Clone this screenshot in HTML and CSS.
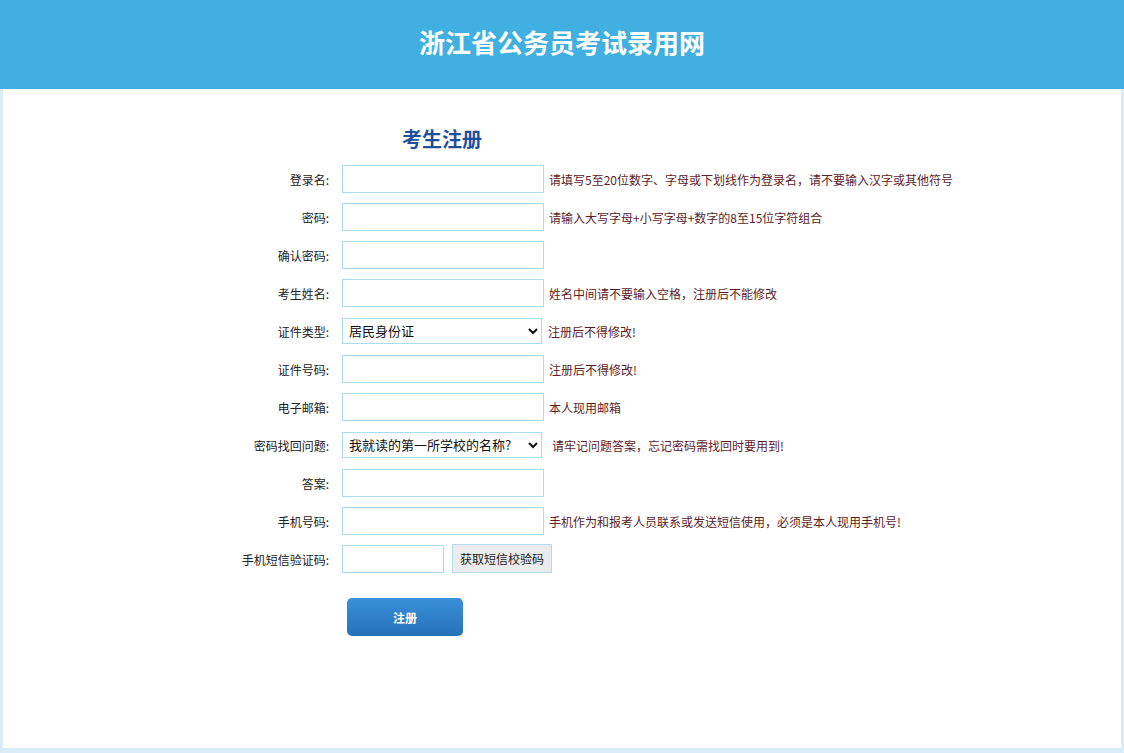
FILE: index.html
```html
<!DOCTYPE html>
<html lang="zh-CN">
<head>
<meta charset="utf-8">
<title>浙江省公务员考试录用网 - 考生注册</title>
<link rel="stylesheet" href="styles.css">
</head>
<body>
<header class="top">
  <h1 class="site-title">浙江省公务员考试录用网</h1>
</header>
<main class="panel">
  <h2 class="reg-title">考生注册</h2>
  <form class="reg-form">
    <div class="row">
      <label class="lbl">登录名:</label>
      <input class="ipt" type="text">
      <span class="hint">请填写5至20位数字、字母或下划线作为登录名，请不要输入汉字或其他符号</span>
    </div>
    <div class="row">
      <label class="lbl">密码:</label>
      <input class="ipt" type="password">
      <span class="hint">请输入大写字母+小写字母+数字的8至15位字符组合</span>
    </div>
    <div class="row">
      <label class="lbl">确认密码:</label>
      <input class="ipt" type="password">
    </div>
    <div class="row">
      <label class="lbl">考生姓名:</label>
      <input class="ipt" type="text">
      <span class="hint">姓名中间请不要输入空格，注册后不能修改</span>
    </div>
    <div class="row">
      <label class="lbl">证件类型:</label>
      <select class="sel"><option>居民身份证</option></select>
      <span class="hint hint-sel">注册后不得修改!</span>
    </div>
    <div class="row">
      <label class="lbl">证件号码:</label>
      <input class="ipt" type="text">
      <span class="hint">注册后不得修改!</span>
    </div>
    <div class="row">
      <label class="lbl">电子邮箱:</label>
      <input class="ipt" type="text">
      <span class="hint">本人现用邮箱</span>
    </div>
    <div class="row">
      <label class="lbl">密码找回问题:</label>
      <select class="sel"><option>我就读的第一所学校的名称?</option></select>
      <span class="hint hint-wide">请牢记问题答案，忘记密码需找回时要用到!</span>
    </div>
    <div class="row">
      <label class="lbl">答案:</label>
      <input class="ipt" type="text">
    </div>
    <div class="row">
      <label class="lbl">手机号码:</label>
      <input class="ipt" type="text">
      <span class="hint">手机作为和报考人员联系或发送短信使用，必须是本人现用手机号!</span>
    </div>
    <div class="row">
      <label class="lbl">手机短信验证码:</label>
      <input class="ipt ipt-short" type="text">
      <button class="sms-btn" type="button">获取短信校验码</button>
    </div>
    <div class="submit-row">
      <button class="submit-btn" type="button">注册</button>
    </div>
  </form>
</main>
</body>
</html>
```

FILE: styles.css
```css
html, body {
  margin: 0;
  padding: 0;
}
body {
  background: #dbecf9;
  height: 753px;
  font-family: "Noto Sans CJK SC", "Noto Sans", sans-serif;
  font-size: 12px;
  color: #222;
}
.top {
  height: 89px;
  background: #41afe1;
  display: flex;
  align-items: center;
  justify-content: center;
}
.site-title {
  margin: 0;
  padding-bottom: 6px;
  color: #fff;
  font-size: 26px;
  font-weight: bold;
  line-height: 30px;
  letter-spacing: 0;
}
.panel {
  display: block;
  margin: 0 3px;
  height: 659px;
  background: #fff;
  box-sizing: border-box;
  padding-top: 36px;
}
.reg-title {
  margin: 0 0 12px 399px;
  font-size: 20px;
  line-height: 28px;
  font-weight: bold;
  color: #1f4f9c;
}
.reg-form {
  margin-left: 228px;
}
.row {
  display: flex;
  align-items: center;
  height: 28px;
  margin-bottom: 10px;
}
.lbl {
  width: 111px;
  text-align: right;
  padding-right: 13px;
  box-sizing: border-box;
  white-space: nowrap;
  color: #222;
}
.ipt {
  width: 202px;
  height: 28px;
  box-sizing: border-box;
  border: 1px solid #a9dcee;
  padding: 0 4px;
  margin: 0;
  font-family: inherit;
  font-size: 12px;
  outline: none;
}
.ipt-short {
  width: 102px;
}
.sel {
  width: 200px;
  height: 26px;
  box-sizing: border-box;
  border: 1px solid #a9dcee;
  margin: -1px 0 0 0;
  padding: 0 2px;
  font-family: inherit;
  font-size: 13px;
  color: #111;
  background: #fff;
}
.hint {
  margin-left: 5px;
  color: #5e1c26;
  white-space: nowrap;
}
.hint-sel {
  margin-left: 6px;
}
.hint-wide {
  margin-left: 10px;
}
.sms-btn {
  margin-left: 8px;
  margin-top: -1px;
  width: 100px;
  height: 29px;
  box-sizing: border-box;
  border: 1px solid #b6dcea;
  background: #e9ebec;
  font-family: inherit;
  font-size: 12px;
  color: #222;
  padding: 0;
}
.submit-row {
  padding-top: 15px;
  padding-left: 116px;
}
.submit-btn {
  width: 116px;
  height: 38px;
  border: none;
  border-radius: 5px;
  background: linear-gradient(#3a8fda, #2672b8);
  color: #fff;
  font-family: inherit;
  font-size: 12px;
  font-weight: bold;
  padding: 0;
}
```
